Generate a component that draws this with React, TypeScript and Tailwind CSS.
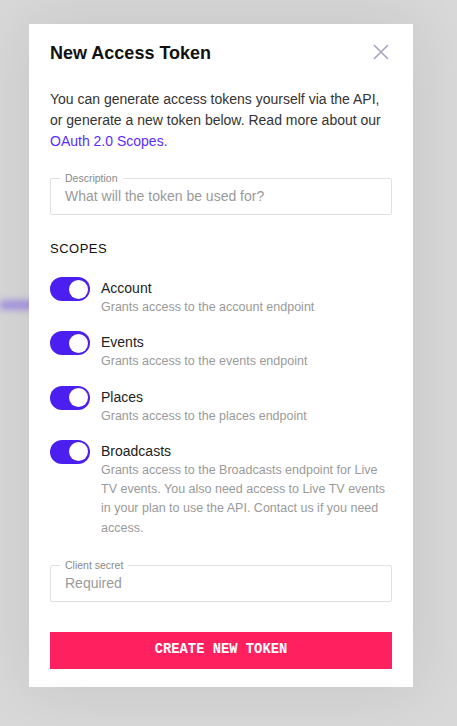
import React from "react";

const scopes = [
  { title: "Account", desc: "Grants access to the account endpoint" },
  { title: "Events", desc: "Grants access to the events endpoint" },
  { title: "Places", desc: "Grants access to the places endpoint" },
  {
    title: "Broadcasts",
    desc: "Grants access to the Broadcasts endpoint for Live TV events. You also need access to Live TV events in your plan to use the API. Contact us if you need access.",
  },
];

function Toggle() {
  return (
    <div className="flex h-[24px] w-[40px] shrink-0 items-center justify-end rounded-full bg-[#4a1ff0] pr-[2px]">
      <div className="h-[19px] w-[19px] rounded-full bg-white" />
    </div>
  );
}

function Field({ label, placeholder }: { label: string; placeholder: string }) {
  return (
    <div className="relative h-[37px] w-full rounded-[2px] border border-[#e2e2e2]">
      <span className="absolute left-[9px] top-[-8px] bg-white px-[5px] text-[10.5px] leading-[14px] text-[#8a8a8a]">
        {label}
      </span>
      <div className="flex h-full items-center pl-[14px] text-[14px] text-[#9a9a9a]">{placeholder}</div>
    </div>
  );
}

export default function App() {
  return (
    <div
      className="relative flex h-[726px] w-[457px] overflow-hidden bg-[#d8d8d8] pl-[29px] pt-[24px]"
      style={{ fontFamily: "'Liberation Sans', Arial, sans-serif" }}
    >
      <div className="absolute left-0 top-[300px] h-[10px] w-[50px] bg-[#a898e2] blur-[3px]" />
      <div className="relative flex h-[663px] w-[384px] flex-col bg-white px-[21px] pt-[15px] shadow-[0_0_60px_rgba(0,0,0,0.09)]">
        <div className="flex items-center justify-between">
          <h1 className="text-[18px] font-bold leading-[28px] text-[#111]">New Access Token</h1>
          <svg width="16" height="16" viewBox="0 0 16 16" className="mr-[3px] mt-[-2px]">
            <path d="M1 1L15 15M15 1L1 15" stroke="#a8a6bf" strokeWidth="1.6" />
          </svg>
        </div>
        <p className="mt-[22px] text-[14px] leading-[21px] text-[#333]">
          You can generate access tokens yourself via the API, or generate a new token below. Read more about our{" "}
          <span className="text-[#5b2cff]">OAuth 2.0 Scopes.</span>
        </p>
        <div className="mt-[26px]">
          <Field label="Description" placeholder="What will the token be used for?" />
        </div>
        <div className="mt-[25px] text-[13px] font-medium leading-[18px] tracking-[0.5px] text-[#111]">SCOPES</div>
        <div className="mt-[19px] flex flex-col gap-[14px]">
          {scopes.map((s) => (
            <div key={s.title} className="flex gap-[11px]">
              <Toggle />
              <div className="flex flex-col">
                <div className="pt-[1px] text-[14px] leading-[20px] text-[#222]">{s.title}</div>
                <div className="text-[12.5px] leading-[19.3px] text-[#9a9a9a]">{s.desc}</div>
              </div>
            </div>
          ))}
        </div>
        <div className="mt-[27px]">
          <Field label="Client secret" placeholder="Required" />
        </div>
        <button
          className="mt-[30px] flex h-[37px] w-full items-center justify-center bg-[#ff2060] text-[13.8px] font-bold text-white"
          style={{ fontFamily: "'Liberation Mono', monospace" }}
        >
          CREATE NEW TOKEN
        </button>
      </div>
    </div>
  );
}
